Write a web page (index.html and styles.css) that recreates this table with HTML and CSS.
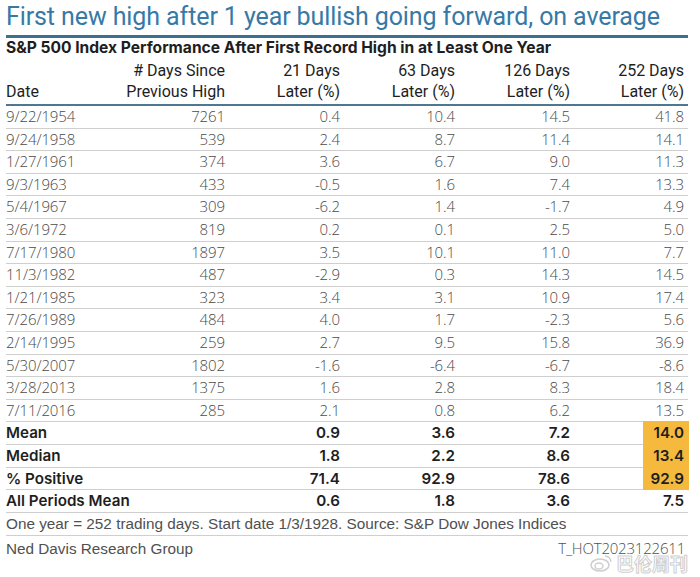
FILE: index.html
```
<!DOCTYPE html>
<html>
<head>
<meta charset="utf-8">
<link rel="stylesheet" href="styles.css">
</head>
<body>
<div class="page">
  <h1 class="title">First new high after 1 year bullish going forward, on average</h1>
  <h2 class="subtitle">S&amp;P 500 Index Performance After First Record High in at Least One Year</h2>
  <div class="table">
    <div class="hrow first">
      <div class="c1"></div><div class="c">#&nbsp;Days Since</div><div class="c">21 Days</div><div class="c">63 Days</div><div class="c">126 Days</div><div class="c">252 Days</div>
    </div>
    <div class="hrow last">
      <div class="c1">Date</div><div class="c">Previous High</div><div class="c">Later (%)</div><div class="c">Later (%)</div><div class="c">Later (%)</div><div class="c">Later (%)</div>
    </div>
    <div class="row"><div class="c1">9/22/1954</div><div class="c">7261</div><div class="c">0.4</div><div class="c">10.4</div><div class="c">14.5</div><div class="c">41.8</div></div>
    <div class="row"><div class="c1">9/24/1958</div><div class="c">539</div><div class="c">2.4</div><div class="c">8.7</div><div class="c">11.4</div><div class="c">14.1</div></div>
    <div class="row"><div class="c1">1/27/1961</div><div class="c">374</div><div class="c">3.6</div><div class="c">6.7</div><div class="c">9.0</div><div class="c">11.3</div></div>
    <div class="row"><div class="c1">9/3/1963</div><div class="c">433</div><div class="c">-0.5</div><div class="c">1.6</div><div class="c">7.4</div><div class="c">13.3</div></div>
    <div class="row"><div class="c1">5/4/1967</div><div class="c">309</div><div class="c">-6.2</div><div class="c">1.4</div><div class="c">-1.7</div><div class="c">4.9</div></div>
    <div class="row"><div class="c1">3/6/1972</div><div class="c">819</div><div class="c">0.2</div><div class="c">0.1</div><div class="c">2.5</div><div class="c">5.0</div></div>
    <div class="row"><div class="c1">7/17/1980</div><div class="c">1897</div><div class="c">3.5</div><div class="c">10.1</div><div class="c">11.0</div><div class="c">7.7</div></div>
    <div class="row"><div class="c1">11/3/1982</div><div class="c">487</div><div class="c">-2.9</div><div class="c">0.3</div><div class="c">14.3</div><div class="c">14.5</div></div>
    <div class="row"><div class="c1">1/21/1985</div><div class="c">323</div><div class="c">3.4</div><div class="c">3.1</div><div class="c">10.9</div><div class="c">17.4</div></div>
    <div class="row"><div class="c1">7/26/1989</div><div class="c">484</div><div class="c">4.0</div><div class="c">1.7</div><div class="c">-2.3</div><div class="c">5.6</div></div>
    <div class="row"><div class="c1">2/14/1995</div><div class="c">259</div><div class="c">2.7</div><div class="c">9.5</div><div class="c">15.8</div><div class="c">36.9</div></div>
    <div class="row"><div class="c1">5/30/2007</div><div class="c">1802</div><div class="c">-1.6</div><div class="c">-6.4</div><div class="c">-6.7</div><div class="c">-8.6</div></div>
    <div class="row"><div class="c1">3/28/2013</div><div class="c">1375</div><div class="c">1.6</div><div class="c">2.8</div><div class="c">8.3</div><div class="c">18.4</div></div>
    <div class="row"><div class="c1">7/11/2016</div><div class="c">285</div><div class="c">2.1</div><div class="c">0.8</div><div class="c">6.2</div><div class="c">13.5</div></div>
    <div class="row bold"><div class="c1">Mean</div><div class="c"></div><div class="c">0.9</div><div class="c">3.6</div><div class="c">7.2</div><div class="c hl"><span class="mark">14.0</span></div></div>
    <div class="row bold"><div class="c1">Median</div><div class="c"></div><div class="c">1.8</div><div class="c">2.2</div><div class="c">8.6</div><div class="c hl"><span class="mark">13.4</span></div></div>
    <div class="row bold"><div class="c1">% Positive</div><div class="c"></div><div class="c">71.4</div><div class="c">92.9</div><div class="c">78.6</div><div class="c hl"><span class="mark">92.9</span></div></div>
    <div class="row bold"><div class="c1">All Periods Mean</div><div class="c"></div><div class="c">0.6</div><div class="c">1.8</div><div class="c">3.6</div><div class="c">7.5</div></div>
  </div>
  <div class="note">One year = 252 trading days. Start date 1/3/1928. Source: S&amp;P Dow Jones Indices</div>
  <div class="foot"><span>Ned Davis Research Group</span><span class="code">T_HOT2023122611</span></div>
  <div class="watermark">
    <svg class="wb" width="22" height="18" viewBox="0 0 22 18"><ellipse cx="10" cy="11" rx="9" ry="6" fill="none" stroke="#cfcfcf" stroke-width="1.6"/><ellipse cx="9" cy="12" rx="4" ry="3" fill="none" stroke="#cfcfcf" stroke-width="1.4"/><path d="M15 2 a6 6 0 0 1 6 6" fill="none" stroke="#cfcfcf" stroke-width="1.4"/></svg>
    <span class="wm-text">巴伦周刊</span>
  </div>
</div>
</body>
</html>
```
FILE: styles.css
```
html, body { margin: 0; padding: 0; background: #fff; }
.page {
  position: relative;
  width: 700px;
  height: 577px;
  padding: 0 12px 0 6px;
  box-sizing: border-box;
  overflow: hidden;
}
.title {
  margin: 0;
  padding-top: 2px;
  height: 38px;
  box-sizing: border-box;
  font-family: Roboto, sans-serif;
  font-weight: 400;
  font-size: 25px;
  line-height: 30px;
  color: #3779a6;
  border-bottom: 3px solid #3d6f8e;
  white-space: nowrap;
  letter-spacing: -0.1px;
}
.subtitle {
  margin: 0;
  height: 20px;
  font-family: Inter, sans-serif;
  font-weight: 700;
  font-size: 15.6px;
  line-height: 20px;
  color: #1e1e1e;
  letter-spacing: 0;
  white-space: nowrap;
}
.table { width: 682px; }
.hrow, .row {
  display: grid;
  grid-template-columns: 120px 99px 115px 115px 115px 114px 4px;
}
.hrow {
  font-family: Roboto, sans-serif;
  font-size: 16px;
  color: #1e1e1e;
}
.hrow.first {
  height: 24px;
  line-height: 26px;
}
.hrow.last {
  height: 22px;
  line-height: 20px;
  border-bottom: 2px solid #4d7890;
}
.row {
  height: 22.6px;
  box-sizing: border-box;
  border-bottom: 1px solid #cfcfcf;
  font-family: "Open Sans", sans-serif;
  font-weight: 300;
  font-size: 15px;
  line-height: 21.6px;
  color: #4a4a4a;
  letter-spacing: -0.1px;
}
.row.bold {
  font-family: Inter, sans-serif;
  font-weight: 600;
  font-size: 15.2px;
  color: #1e1e1e;
  letter-spacing: 0;
}
.c { text-align: right; white-space: nowrap; }
.c1 { text-align: left; white-space: nowrap; }
.hl { position: relative; }
.mark {
  position: absolute;
  right: -5px;
  top: -1px;
  width: 46px;
  height: 23.6px;
  box-sizing: border-box;
  padding-right: 5px;
  background: #f4b93d;
  text-align: right;
  line-height: 23.6px;
}
.note {
  height: 23px;
  box-sizing: border-box;
  width: 682px;
  border-bottom: 1px solid #cfcfcf;
  font-family: "Liberation Sans", Arial, sans-serif;
  font-size: 15.3px;
  line-height: 22px;
  color: #505050;
  white-space: nowrap;
}
.foot {
  width: 679px;
  display: flex;
  justify-content: space-between;
  height: 23px;
  font-family: "Liberation Sans", Arial, sans-serif;
  font-size: 15.3px;
  line-height: 25px;
  color: #505050;
}
.foot .code {
  font-family: "Open Sans", sans-serif;
  font-weight: 300;
  font-size: 15px;
  letter-spacing: -0.2px;
}
.watermark {
  position: absolute;
  right: 12px;
  bottom: 1px;
  display: flex;
  align-items: center;
  gap: 4px;
  font-family: "Noto Sans CJK SC", sans-serif;
  font-size: 18px;
  font-weight: 700;
  color: #fff;
  -webkit-text-stroke: 1px #d0d0d0;
}
```
